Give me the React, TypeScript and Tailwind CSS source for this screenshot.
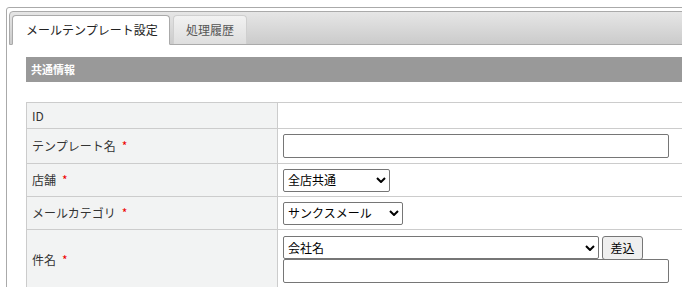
const Chevron = () => (
  <svg width="10" height="6" viewBox="0 0 10 6" className="shrink-0">
    <path d="M1 1 L5 5 L9 1" fill="none" stroke="#000" strokeWidth="2" />
  </svg>
);

const FakeSelect = ({ value, w }: { value: string; w: string }) => (
  <div
    className={`${w} h-[23px] flex items-center justify-between pl-[4px] pr-[3px] border border-[#767676] rounded-[2px] bg-white text-[12px] text-black`}
  >
    <span>{value}</span>
    <Chevron />
  </div>
);

const Req = () => <span className="text-[#ee0000] ml-[6px]">*</span>;

const Row = ({
  h,
  label,
  children,
  col,
}: {
  h: string;
  label: React.ReactNode;
  children?: React.ReactNode;
  col?: boolean;
}) => (
  <div className={`flex ${h} border-b border-[#cccccc]`}>
    <div className="w-[251px] shrink-0 bg-[#f2f3f3] border-r border-[#cccccc] flex items-center pl-[5px] text-[12px] text-[#333]">
      {label}
    </div>
    <div
      className={`flex-1 pl-[5px] ${col ? "flex flex-col items-start pt-[6px]" : "flex items-center"}`}
    >
      {children}
    </div>
  </div>
);

export default function App() {
  return (
    <div className="w-[682px] h-[287px] overflow-hidden bg-white font-['Noto_Sans_CJK_JP','Noto_Sans',sans-serif]">
      <div className="ml-[6px] mt-[7px] w-[740px] h-[300px] border border-[#aaaaaa] rounded-tl-[3px] pt-[3px] px-[2px]">
        {/* タブ */}
        <div className="h-[34px] border border-[#aaaaaa] rounded-t-[4px] bg-gradient-to-b from-[#e6e6e6] to-[#cbcbcb] flex items-end pl-[2px] gap-[3px]">
          <div className="w-[158px] h-[30px] -mb-px bg-white border border-[#aaaaaa] border-b-white rounded-t-[4px] flex items-center pl-[13px] text-[12px] text-[#222]">
            メールテンプレート設定
          </div>
          <div className="w-[74px] h-[29px] bg-gradient-to-b from-[#f2f2f2] to-[#dedede] border border-b-0 border-[#cfcfcf] rounded-t-[4px] flex items-center pl-[12px] text-[12px] text-[#555]">
            処理履歴
          </div>
        </div>

        <div className="ml-[17px] mt-[12px]">
          <div className="h-[25px] bg-[#999999] flex items-center pl-[5px] text-[11px] font-bold text-white">
            共通情報
          </div>

          <div className="mt-[20px] border-t border-l border-[#cccccc]">
            <Row h="h-[26px]" label="ID" />
            <Row
              h="h-[35px]"
              label={
                <>
                  テンプレート名
                  <Req />
                </>
              }
            >
              <div className="w-[386px] h-[24px] border border-[#767676] rounded-[2px] bg-white" />
            </Row>
            <Row
              h="h-[33px]"
              label={
                <>
                  店舗
                  <Req />
                </>
              }
            >
              <FakeSelect value="全店共通" w="w-[107px]" />
            </Row>
            <Row
              h="h-[33px]"
              label={
                <>
                  メールカテゴリ
                  <Req />
                </>
              }
            >
              <FakeSelect value="サンクスメール" w="w-[120px]" />
            </Row>
            <Row
              h="h-[60px]"
              col
              label={
                <>
                  件名
                  <Req />
                </>
              }
            >
              <div className="flex items-start gap-[3px]">
                <FakeSelect value="会社名" w="w-[316px]" />
                <button className="w-[41px] h-[24px] bg-[#efefef] border border-[#767676] rounded-[3px] text-[12px] text-black">
                  差込
                </button>
              </div>
              <div className="-mt-px w-[386px] h-[24px] border border-[#767676] rounded-[2px] bg-white" />
            </Row>
          </div>
        </div>
      </div>
    </div>
  );
}
